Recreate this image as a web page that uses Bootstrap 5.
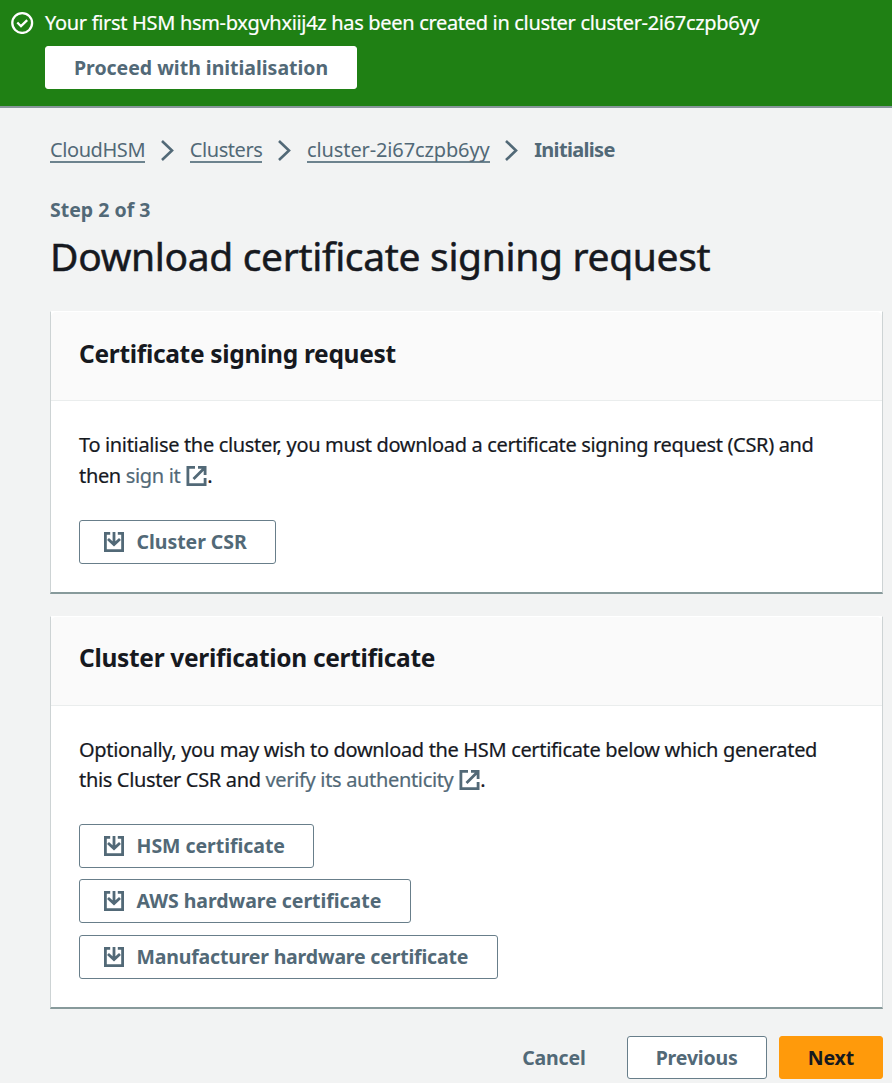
<!DOCTYPE html>
<html lang="en">
<head>
<meta charset="utf-8">
<meta name="viewport" content="width=device-width, initial-scale=1">
<title>Download certificate signing request</title>
<link href="https://cdn.jsdelivr.net/npm/bootstrap@5.3.0/dist/css/bootstrap.min.css" rel="stylesheet">
<style>
  body { font: 400 20px/30.6px "Noto Sans", sans-serif; letter-spacing: -.335px; color: #16191f; background: #f2f3f3; overflow: hidden; }
  svg { display: block; flex: none; fill: none; stroke: currentColor; }
  .flash { height: 108px; padding: 7px 10px 0 11px; background: #1f8014; border-bottom: 2px solid #87969a; }
  .flash-body { margin-left: 11px; }
  .flash-text { line-height: 31px; letter-spacing: -.32px; white-space: nowrap; -webkit-text-stroke: .2px; }
  .btn { --bs-btn-font-size: 19.5px; --bs-btn-font-weight: 700; --bs-btn-line-height: 41px; --bs-btn-padding-y: 0; --bs-btn-padding-x: 28px;
    --bs-btn-border-radius: 3px; letter-spacing: -.04px; white-space: nowrap; }
  .flash .btn { letter-spacing: -.02px; border-color: #fff; }
  .btn-plain { --bs-btn-color: #526977; --bs-btn-bg: #fff; --bs-btn-border-color: #687e8a; --bs-btn-hover-color: #16191f; --bs-btn-hover-bg: #fafafa; --bs-btn-hover-border-color: #16191f; }
  .btn-bare { --bs-btn-color: #526977; }
  .btn-go { --bs-btn-color: #16191f; --bs-btn-bg: #ff9a0b; --bs-btn-border-color: #ff9a0b; --bs-btn-hover-bg: #ec7211; }
  .btn-file { --bs-btn-line-height: 42px; --bs-btn-padding-x: 24px; padding-right: 28.5px; }
  .btn-file svg { margin-right: 12.5px; }
  .btn-long { letter-spacing: -.19px; }
  .actions .btn { letter-spacing: -.15px; }
  .page { padding: 27px 9px 0 50px; }
  .trail { color: #526977; height: 31px; line-height: 30px; letter-spacing: -.42px; white-space: nowrap; }
  .trail a { color: inherit; text-decoration: none; height: 28px; border-bottom: 2px solid #6d838e; }
  .trail a.wide { letter-spacing: -.12px; }
  .trail svg { margin: 5px 16px 0 15.6px; }
  .trail b { letter-spacing: -.68px; }
  .step { color: #526977; font-weight: 700; font-size: 19.5px; line-height: 30px; margin-top: 29px; letter-spacing: 0; }
  h1 { font-size: 39px; font-weight: 400; line-height: 48px; letter-spacing: -.33px; margin: 7px 0 0; height: 79px; color: #16191f; white-space: nowrap; -webkit-text-stroke: .5px; }
  .card { --bs-card-border-width: 0; --bs-card-border-radius: 0; --bs-card-cap-bg: #fafafa; margin-bottom: 22px;
    border: 1px solid #cdd3d4; border-top-color: #fff; border-bottom: 2px solid #879a9b; }
  .card-header { height: 89px; padding: 26.5px 28px 0; border-bottom: 1px solid #eaeded; }
  .card-body { padding: 29px 28px 28px; }
  h2 { font-size: 24.5px; font-weight: 700; line-height: 30px; letter-spacing: -.31px; margin: 0; color: #16191f; }
  .card-body p { margin: 0 0 28.4px; -webkit-text-stroke: .2px; }
  .card-body p a { color: #526977; text-decoration: none; }
  .card-body p svg { display: inline-block; vertical-align: -3px; margin-left: 1px; }
  .files { gap: 11.2px; }
  .actions { gap: 12px; margin-top: 27px; }
</style>
</head>
<body>
<svg class="d-none">
  <symbol id="download" viewBox="0 0 20 20"><path d="M6.2 1.4H1.4v17.2h17.2V1.4H13.800M10 0v12M4 7l6 5.600L16 7" stroke-width="2.8"/></symbol>
  <symbol id="external" viewBox="0 0 20 20"><path d="M8.500 1.4H1.4v17.2h17.2V12M11.5 1.4h7.1V9M18 2 7 13" stroke-width="2.8"/></symbol>
  <symbol id="chevron" viewBox="0 0 13 21"><path d="m1 1 10 9.5L1 20" stroke-width="2.6"/></symbol>
</svg>
<div class="flash text-white d-flex">
  <svg class="mt-1" width="23" height="23" viewBox="0 0 23 23" stroke-width="2.3"><circle cx="11.2" cy="12" r="9.9"/><path d="m6.3 11.5 3.7 3.7 6.200-6"/></svg>
  <div class="flash-body">
    <div class="flash-text">Your first HSM hsm-bxgvhxiij4z has been created in cluster cluster-2i67czpb6yy</div>
    <button class="btn btn-plain mt-2">Proceed with initialisation</button>
  </div>
</div>
<main class="page">
  <nav class="trail d-flex" aria-label="breadcrumb">
    <a href="#">CloudHSM</a><svg width="13" height="21"><use href="#chevron"/></svg>
    <a href="#">Clusters</a><svg width="13" height="21"><use href="#chevron"/></svg>
    <a class="wide" href="#">cluster-2i67czpb6yy</a><svg width="13" height="21"><use href="#chevron"/></svg>
    <b>Initialise</b>
  </nav>
  <div class="step">Step 2 of 3</div>
  <h1>Download certificate signing request</h1>
  <section class="card">
    <div class="card-header"><h2>Certificate signing request</h2></div>
    <div class="card-body">
      <p>To initialise the cluster, you must download a certificate signing request (CSR) and<br>then <a href="#">sign it <svg width="21" height="20"><use href="#external"/></svg></a>.</p>
      <button class="btn btn-plain btn-file d-flex align-items-center"><svg width="20" height="20"><use href="#download"/></svg>Cluster CSR</button>
    </div>
  </section>
  <section class="card">
    <div class="card-header"><h2>Cluster verification certificate</h2></div>
    <div class="card-body">
      <p>Optionally, you may wish to download the HSM certificate below which generated<br>this Cluster CSR and <a href="#">verify its authenticity <svg width="21" height="20"><use href="#external"/></svg></a>.</p>
      <div class="files d-flex flex-column align-items-start">
        <button class="btn btn-plain btn-file d-flex align-items-center"><svg width="20" height="20"><use href="#download"/></svg>HSM certificate</button>
        <button class="btn btn-plain btn-file d-flex align-items-center"><svg width="20" height="20"><use href="#download"/></svg>AWS hardware certificate</button>
        <button class="btn btn-plain btn-file btn-long d-flex align-items-center"><svg width="20" height="20"><use href="#download"/></svg>Manufacturer hardware certificate</button>
      </div>
    </div>
  </section>
  <div class="actions d-flex justify-content-end">
    <button class="btn btn-bare">Cancel</button>
    <button class="btn btn-plain">Previous</button>
    <button class="btn btn-go">Next</button>
  </div>
</main>
<script src="https://cdn.jsdelivr.net/npm/bootstrap@5.3.0/dist/js/bootstrap.bundle.min.js"></script>
</body>
</html>
